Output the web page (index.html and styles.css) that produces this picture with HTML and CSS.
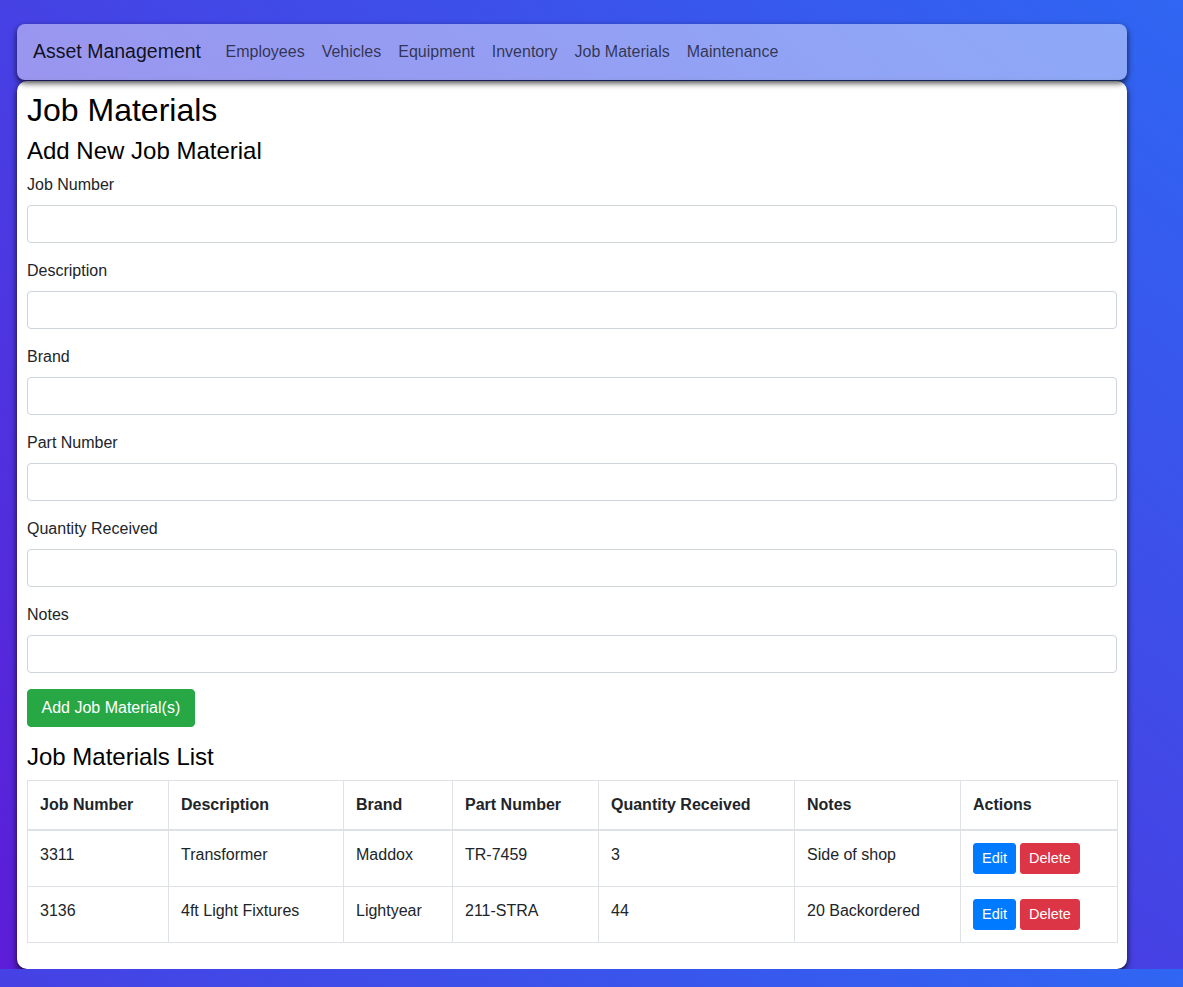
FILE: index.html
```html
<!DOCTYPE html>
<html lang="en">
<head>
<meta charset="utf-8">
<title>Job Materials</title>
<link rel="stylesheet" href="styles.css">
</head>
<body>
<div class="wrap">
  <nav class="navbar">
    <span class="brand">Asset Management</span>
    <a class="nav-link" href="#">Employees</a>
    <a class="nav-link" href="#">Vehicles</a>
    <a class="nav-link" href="#">Equipment</a>
    <a class="nav-link" href="#">Inventory</a>
    <a class="nav-link" href="#">Job Materials</a>
    <a class="nav-link" href="#">Maintenance</a>
  </nav>
  <main class="card">
    <h1 class="title">Job Materials</h1>
    <h2 class="subtitle form-title">Add New Job Material</h2>
    <form class="form">
      <div class="group"><label class="label">Job Number</label><input class="input" type="text"></div>
      <div class="group"><label class="label">Description</label><input class="input" type="text"></div>
      <div class="group"><label class="label">Brand</label><input class="input" type="text"></div>
      <div class="group"><label class="label">Part Number</label><input class="input" type="text"></div>
      <div class="group"><label class="label">Quantity Received</label><input class="input" type="text"></div>
      <div class="group"><label class="label">Notes</label><input class="input" type="text"></div>
      <button type="button" class="btn-add">Add Job Material(s)</button>
    </form>
    <h2 class="subtitle">Job Materials List</h2>
    <table class="table">
      <thead>
        <tr>
          <th class="c1">Job Number</th>
          <th class="c2">Description</th>
          <th class="c3">Brand</th>
          <th class="c4">Part Number</th>
          <th class="c5">Quantity Received</th>
          <th class="c6">Notes</th>
          <th class="c7">Actions</th>
        </tr>
      </thead>
      <tbody>
        <tr>
          <td>3311</td>
          <td>Transformer</td>
          <td>Maddox</td>
          <td>TR-7459</td>
          <td>3</td>
          <td>Side of shop</td>
          <td><div class="actions"><button type="button" class="btn-sm btn-edit">Edit</button><button type="button" class="btn-sm btn-delete">Delete</button></div></td>
        </tr>
        <tr>
          <td>3136</td>
          <td>4ft Light Fixtures</td>
          <td>Lightyear</td>
          <td>211-STRA</td>
          <td>44</td>
          <td>20 Backordered</td>
          <td><div class="actions"><button type="button" class="btn-sm btn-edit">Edit</button><button type="button" class="btn-sm btn-delete">Delete</button></div></td>
        </tr>
      </tbody>
    </table>
  </main>
</div>
</body>
</html>
```
FILE: styles.css
```css
* { box-sizing: border-box; }
html, body { margin: 0; padding: 0; }
body {
  background: linear-gradient(to top right, #5c1dd6, #2f66f2);
  font-family: "Liberation Sans", Arial, sans-serif;
  color: #212529;
  font-size: 16px;
  line-height: 1.5;
}
.wrap {
  width: 1110px;
  margin-left: 17px;
  padding-top: 24px;
}
.navbar {
  position: relative;
  z-index: 2;
  height: 56px;
  display: flex;
  align-items: center;
  padding: 0 16px;
  background: rgba(255, 255, 255, 0.45);
  border-radius: 8px;
  box-shadow: 0 3px 6px rgba(0, 0, 0, 0.75);
}
.brand {
  font-size: 19.5px;
  color: rgba(0, 0, 0, 0.9);
  margin-right: 16px;
  line-height: 1.5;
}
.nav-link {
  padding: 8px 8.5px;
  color: rgba(0, 0, 0, 0.68);
  text-decoration: none;
  font-size: 16px;
  line-height: 1.5;
}
.card {
  position: relative;
  z-index: 1;
  display: block;
  margin-top: 1px;
  background: #fff;
  border-radius: 10px;
  padding: 10px 10px 10px;
  box-shadow: 0 3px 6px rgba(0, 0, 0, 0.8);
}
.title {
  margin: 0 0 8px;
  font-size: 32px;
  font-weight: 400;
  line-height: 1.2;
  color: #000;
}
.subtitle {
  margin: 0 0 8px;
  font-size: 24px;
  font-weight: 400;
  line-height: 1.2;
  color: #000;
}
.form-title {
  margin-bottom: 7px;
}
.form {
  margin: 0 0 16px;
}
.group {
  margin-bottom: 16px;
}
.label {
  display: block;
  margin-bottom: 8px;
  line-height: 24px;
}
.input {
  display: block;
  width: 100%;
  height: 38px;
  padding: 6px 12px;
  font-family: inherit;
  font-size: 16px;
  border: 1px solid #ced4da;
  border-radius: 4px;
  background: #fff;
}
.btn-add {
  display: block;
  height: 38px;
  padding: 0 13.5px;
  font-family: inherit;
  font-size: 16px;
  color: #fff;
  background: #28a745;
  border: 1px solid #28a745;
  border-radius: 4px;
}
.table {
  width: 100%;
  table-layout: fixed;
  border-collapse: collapse;
  margin-bottom: 16px;
}
.table th, .table td {
  border: 1px solid #dee2e6;
  padding: 12px;
  text-align: left;
  vertical-align: top;
  line-height: 24px;
}
.table th {
  font-weight: 700;
}
.table thead th {
  border-bottom: 2px solid #dee2e6;
  vertical-align: bottom;
}
.c1 { width: 141px; }
.c2 { width: 175px; }
.c3 { width: 109px; }
.c4 { width: 146px; }
.c5 { width: 196px; }
.c6 { width: 166px; }
.c7 { width: 157px; }
.actions {
  display: flex;
  gap: 4px;
}
.btn-sm {
  height: 31px;
  padding: 0 8px;
  font-family: inherit;
  font-size: 14.5px;
  color: #fff;
  border-radius: 3px;
  border: 1px solid transparent;
}
.btn-edit { background: #007bff; border-color: #007bff; }
.btn-delete { background: #dc3545; border-color: #dc3545; }
```
